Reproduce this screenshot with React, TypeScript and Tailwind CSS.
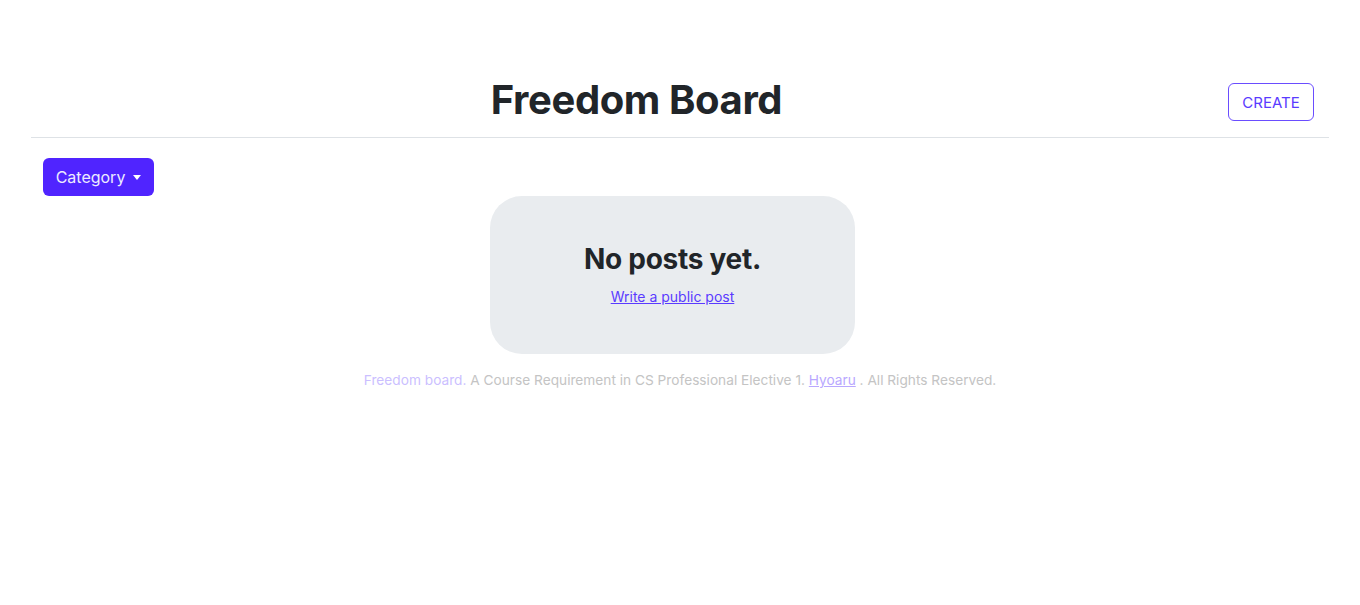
import React from "react";

export default function App() {
  return (
    <div className="min-h-[605px] bg-white text-[#212529]" style={{ fontFamily: "Inter, 'Noto Sans', sans-serif" }}>
      <div className="mx-[31px] pt-[76px] pb-[13px] border-b border-[#dee2e6] flex items-center">
        <div className="flex-1 flex justify-center pl-[14px]">
          <h1 className="text-[40px] leading-[1.2] font-bold tracking-[-0.01em]">Freedom Board</h1>
        </div>
        <button className="mt-[4px] mr-[15px] h-[38px] w-[86px] rounded-[6px] border border-[#6a4dff] text-[#5a3bff] text-[15px] leading-none">
          CREATE
        </button>
      </div>
      <div className="px-[43px] pt-[20px]">
        <button className="h-[38px] w-[111px] rounded-[6px] bg-[#5024ff] text-[#ecebff] text-[16px] flex items-center justify-center">
          Category
          <span className="ml-[8px] w-0 h-0 border-t-[5px] border-t-white border-l-[4px] border-l-transparent border-r-[4px] border-r-transparent"></span>
        </button>
      </div>
      <div className="flex justify-center pr-[15px]">
        <div className="w-[365px] h-[158px] rounded-[32px] bg-[#e9ecef] flex flex-col items-center pt-[47px]">
          <h2 className="text-[28px] leading-[1.2] font-bold tracking-[-0.01em]">No posts yet.</h2>
          <a href="#" className="mt-[9px] text-[14px] leading-[21px] text-[#5a3bff] underline">Write a public post</a>
        </div>
      </div>
      <p className="mt-[16px] text-center text-[13.7px] leading-[21px] text-[#c4c4c4]">
        <span className="text-[#cbbfff]">Freedom board.</span> A Course Requirement in CS Professional Elective 1.{" "}
        <a href="#" className="text-[#b9a8ff] underline">Hyoaru</a> . All Rights Reserved.
      </p>
    </div>
  );
}
